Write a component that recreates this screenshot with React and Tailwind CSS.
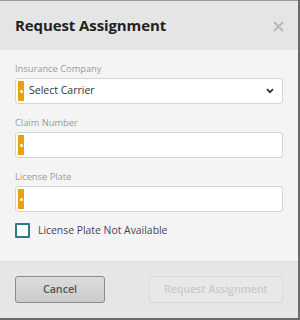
import React from "react";

function Marker() {
  return (
    <div className="absolute left-[2px] top-[2px] bottom-[2px] w-[6px] bg-[#e8a20c] flex items-center justify-center">
      <div className="w-[3px] h-[3px] rounded-full bg-white" />
    </div>
  );
}

function Field({ label, children }) {
  return (
    <div className="flex flex-col">
      <div className="text-[9.3px] leading-[12px] text-[#9a9a9a] h-[20px] pt-[5px]">{label}</div>
      {children}
    </div>
  );
}

export default function App() {
  return (
    <div className="w-[300px] h-[320px] bg-[#6a6a6a]" style={{ fontFamily: '"Open Sans", "Noto Sans", sans-serif' }}>
      <div className="w-[298px] h-[318px] flex flex-col border-t border-t-[#9a9a9a] bg-[#f4f4f4]">
        <div className="h-[49px] bg-[#e6e5e6] flex items-center justify-between pl-[15px] pr-[14px] pb-[1px]">
          <div className="text-[15px] font-bold text-[#222] tracking-[-0.1px]">Request Assignment</div>
          <svg width="11" height="11" viewBox="0 0 11 11" className="mt-[2px]">
            <path d="M1 1L10 10M10 1L1 10" stroke="#bababa" strokeWidth="2.2" />
          </svg>
        </div>
        <div className="flex-1 bg-[#f4f4f4] px-[15px] pt-[8px] flex flex-col gap-[8px]">
          <Field label="Insurance Company">
            <div className="relative h-[26px] bg-white border border-[#d4d4d4] rounded-[3px] flex items-center pl-[13px] pr-[8px] justify-between">
              <Marker />
              <span className="text-[10.5px] text-[#333]">Select Carrier</span>
              <svg width="8" height="6" viewBox="0 0 8 6">
                <path d="M1 1.2L4 4.2L7 1.2" stroke="#333" strokeWidth="1.8" fill="none" />
              </svg>
            </div>
          </Field>
          <Field label="Claim Number">
            <div className="relative h-[26px] bg-white border border-[#d4d4d4] rounded-[3px]">
              <Marker />
            </div>
          </Field>
          <Field label="License Plate">
            <div className="relative h-[26px] bg-white border border-[#d4d4d4] rounded-[3px]">
              <Marker />
            </div>
          </Field>
          <div className="flex items-center gap-[8px] mt-[3px] h-[15px]">
            <div className="w-[15px] h-[15px] border-2 border-[#2f7a8e] rounded-[1px] bg-white" />
            <span className="text-[10.4px] leading-[15px] text-[#4a3f55]">License Plate Not Available</span>
          </div>
        </div>
        <div className="h-[57px] bg-[#e7e6e7] border-t border-t-[#dcdcdc] flex items-center justify-between px-[15px] pb-[1px]">
          <button className="w-[90px] h-[27px] rounded-[3px] border border-[#8c8c8c] bg-gradient-to-b from-[#dcdcdc] to-[#cbcbcb] text-[10.7px] font-semibold text-[#555]">
            Cancel
          </button>
          <button className="w-[134px] h-[27px] rounded-[3px] border border-[#d9d9d9] bg-[#e9e8e9] text-[10.5px] font-semibold text-[#c9c9c9]">
            Request Assignment
          </button>
        </div>
      </div>
    </div>
  );
}
